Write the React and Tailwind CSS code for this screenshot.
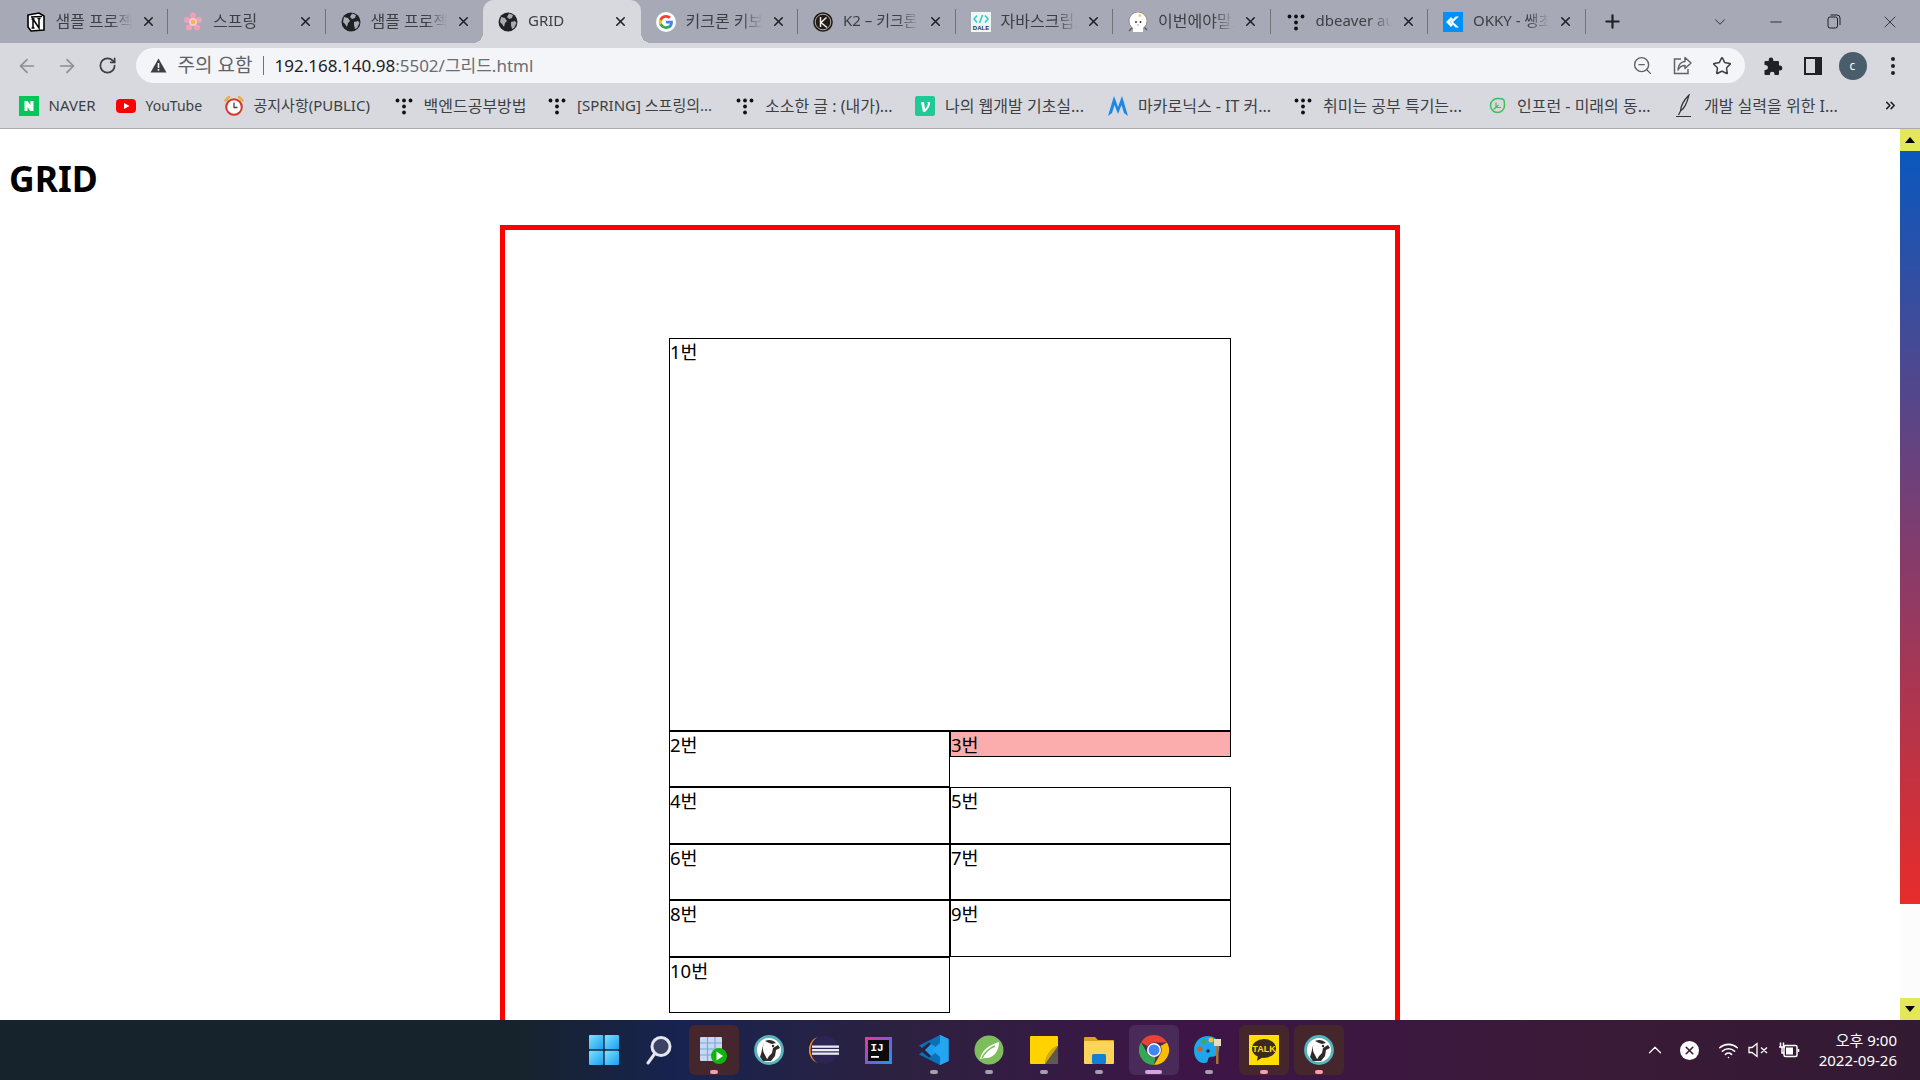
import React from "react";
import {
	ArrowLeft,
	ArrowRight,
	RotateCw,
	ZoomOut,
	Star,
	X,
	Plus,
	ChevronDown,
	ChevronUp,
	Minus,
	ChevronsRight,
	Wifi,
} from "lucide-react";

const Globe = () => (
	<svg width="20" height="20" viewBox="0 0 20 20">
		<circle cx="10" cy="10" r="9.5" fill="#202124" />
		<path d="M3 5l4 1 2 3-2 2-1 4-2-3-2-2zM11 1.5l4 1.5-1 3-3 1-2-2zM13 10l4-1 1.500 2-2.500 5-2 1-1-4z" fill="#a8abb7" />
	</svg>
);

const Notion = () => (
	<svg width="20" height="20" viewBox="0 0 20 20">
		<path d="M2 3l11-2 5 3v14l-13 1-3-4z" fill="#fff" stroke="#000" strokeWidth="1.600" />
		<path d="M5 5l11-.5" stroke="#000" strokeWidth="1.400" />
		<path d="M7 16V7l6 9V6.500M5.500 7H8.500M11.500 6.500h3M5.500 16h3" fill="none" stroke="#000" strokeWidth="1.500" />
	</svg>
);

const Flower = () => (
	<svg width="20" height="20" viewBox="0 0 20 20">
		<circle cx="10" cy="3.500" r="3" fill="#f2a0b5" />
		<circle cx="16" cy="8" r="3" fill="#f0a3b8" />
		<circle cx="14" cy="15.500" r="3" fill="#f2a0b5" />
		<circle cx="6" cy="15.500" r="3" fill="#f0a3b8" />
		<circle cx="4" cy="8" r="3" fill="#f2a0b5" />
		<circle cx="10" cy="10" r="4" fill="#f8c8d4" />
		<circle cx="10" cy="10" r="2.200" fill="#f6b73c" />
	</svg>
);

const GoogleG = () => (
	<svg width="20" height="20" viewBox="0 0 20 20">
		<circle cx="10" cy="10" r="10" fill="#fff" />
		<path d="M16.900 10.200c0-.5 0-1-.1-1.400H10v2.700h3.900c-.2.900-.7 1.700-1.500 2.200v1.800h2.400c1.400-1.300 2.100-3.100 2.100-5.300z" fill="#4285f4" />
		<path d="M10 17c2 0 3.600-.7 4.800-1.700l-2.400-1.800c-.6.400-1.400.7-2.400.7-1.900 0-3.500-1.300-4.100-3H3.500v1.900C4.700 15.400 7.100 17 10 17z" fill="#34a853" />
		<path d="M5.900 11.200c-.3-.8-.3-1.600 0-2.400V6.900H3.500c-.8 1.700-.8 4.500 0 6.200z" fill="#fbbc05" />
		<path d="M10 5.800c1.100 0 2 .4 2.800 1.100l2.100-2.100C13.600 3.700 12 3 10 3 7.100 3 4.700 4.600 3.500 6.900l2.400 1.900c.6-1.700 2.200-3 4.100-3z" fill="#ea4335" />
	</svg>
);

const K2 = () => (
	<svg width="20" height="20" viewBox="0 0 20 20">
		<circle cx="10" cy="10" r="9.800" fill="#201a18" />
		<circle cx="10" cy="10" r="7.800" fill="none" stroke="#d7ccc4" strokeWidth="0.800" />
		<path d="M7.500 5v10M13.500 5.500L8 10.500l6 5" fill="none" stroke="#f3ece6" strokeWidth="1.500" />
	</svg>
);

const Dale = () => (
	<svg width="20" height="20" viewBox="0 0 20 20">
		<rect width="20" height="20" fill="#f2f5f4" />
		<path d="M6 3.500L3 7l3 3.500M14 3.500L17 7l-3 3.500M11.500 3L8.500 11" fill="none" stroke="#24d3c0" strokeWidth="1.500" />
		<text x="10" y="17.500" textAnchor="middle" fontSize="6" fontWeight="800" fill="#23324a" fontFamily="'Liberation Sans',sans-serif">DALE</text>
	</svg>
);

const Ghost = () => (
	<svg width="20" height="20" viewBox="0 0 20 20">
		<path d="M1 19l4-4M19 18l-4-4" stroke="#555" strokeWidth="1.200" />
		<circle cx="10" cy="9" r="9" fill="#fff" stroke="#777" strokeWidth="0.700" />
		<path d="M5 16h10v4H5z" fill="#fff" />
		<circle cx="8" cy="10" r="0.900" fill="#222" />
		<circle cx="12.500" cy="10" r="0.900" fill="#222" />
		<path d="M9 13h2" stroke="#b77" strokeWidth="0.800" />
		<circle cx="12" cy="3.500" r="1.500" fill="#f4d65c" />
	</svg>
);

const TDots = () => (
	<svg width="20" height="20" viewBox="0 0 20 20" fill="#111">
		<circle cx="3.500" cy="4.500" r="1.900" />
		<circle cx="10" cy="4.500" r="1.900" />
		<circle cx="16.500" cy="4.500" r="1.900" />
		<circle cx="10" cy="10.500" r="1.900" />
		<circle cx="10" cy="16.500" r="1.900" />
	</svg>
);

const Okky = () => (
	<svg width="20" height="20" viewBox="0 0 20 20">
		<rect width="20" height="20" fill="#0090f9" />
		<path d="M8 5l-5 5 5 5 2-2-3-3 3-3zM16 4.500l-6 5.500 6 5.500h-3.500L7.500 10l5-5.500z" fill="#fff" />
	</svg>
);

const Naver = () => (
	<svg width="20" height="20" viewBox="0 0 20 20">
		<rect width="20" height="20" fill="#03c75a" />
		<path d="M5.500 5h3.200l2.700 4V5h3.100v10h-3.200L8.600 11v4H5.500z" fill="#fff" />
	</svg>
);

const YouTube = () => (
	<svg width="20" height="20" viewBox="0 0 20 20">
		<rect y="3" width="20" height="14" rx="4" fill="#ff0000" />
		<path d="M8 7l5.500 3L8 13z" fill="#fff" />
	</svg>
);

const Alarm = () => (
	<svg width="20" height="22" viewBox="0 0 20 22">
		<path d="M1.500 5.500L5 2M18.500 5.500L15 2" stroke="#e6b143" strokeWidth="2.500" strokeLinecap="round" />
		<circle cx="10" cy="12" r="7.800" fill="#fff" stroke="#d9352c" strokeWidth="2" />
		<path d="M10 7.500V12.500h3.500" fill="none" stroke="#444" strokeWidth="1.300" />
	</svg>
);

const Vlog = () => (
	<svg width="20" height="20" viewBox="0 0 20 20">
		<rect width="20" height="20" rx="2" fill="#20c997" />
		<path d="M6 6h3l1 7c2-2 3-4 3-6l-1-1h3c.5 3-1.500 7-5 10H8z" fill="#fff" />
	</svg>
);

const Macro = () => (
	<svg width="20" height="22" viewBox="0 0 20 22">
		<path d="M0 21L6 1l4 11 4-11 6 20-4-3-2.500-8L10 19l-3.500-9L4 18z" fill="#1b87e6" />
	</svg>
);

const Leaf = () => (
	<svg width="17" height="17" viewBox="0 0 17 17" fill="none" stroke="#3cbf5c" strokeWidth="1.500">
		<path d="M8.500 1.500a7 7 0 1 0 7 7c0-2 0-5-1-6s-4-1-6-1z" />
		<path d="M4.500 12.500l5-4.500M7 5.500v5h5" strokeWidth="1.200" />
	</svg>
);

const Pen = () => (
	<svg width="18" height="24" viewBox="0 0 18 24" fill="none" stroke="#333" strokeWidth="1.200">
		<path d="M14 1C10 5 6 11 5.500 17 9 15 12 9 14 1zM5.500 17L3.500 21M1 22.500h15" />
	</svg>
);

const Share = () => (
	<svg width="21" height="21" viewBox="0 0 21 21" fill="none" stroke="#5f6368" strokeWidth="1.500">
		<path d="M9 4H2.500v14.500H16V14" />
		<path d="M13 2.500L19 8l-6 5.500V10.500C9.500 10.500 7.500 12 6 15c0-5 3-8.500 7-8.500z" strokeLinejoin="round" />
	</svg>
);

const Puzzle = () => (
	<svg width="20" height="20" viewBox="0 0 20 20" fill="#202124">
		<path d="M8 1.500a2.300 2.300 0 0 1 2.300 2.300V5H15a1 1 0 0 1 1 1v3.500h.800a2.500 2.500 0 0 1 0 5H16V18a1 1 0 0 1-1 1h-3.500v-1a2.300 2.300 0 0 0-4.600 0v1H2.500a1 1 0 0 1-1-1v-4h1a2.500 2.500 0 0 0 0-5h-1V6a1 1 0 0 1 1-1h3.200V3.800A2.300 2.300 0 0 1 8 1.500z" />
	</svg>
);

const SidePanel = () => (
	<svg width="18" height="18" viewBox="0 0 18 18">
		<rect x="1" y="1" width="16" height="16" fill="none" stroke="#202124" strokeWidth="2" />
		<rect x="11" y="1" width="6" height="16" fill="#202124" />
	</svg>
);

const Restore = () => (
	<svg width="14" height="15" viewBox="0 0 14 15" fill="none" stroke="#202124" strokeWidth="1">
		<rect x="1" y="3" width="9.500" height="11" rx="2" />
		<path d="M3.500 1h6.500a3 3 0 0 1 3 3v7" />
	</svg>
);

const Warning = () => (
	<svg width="17" height="15" viewBox="0 0 17 15">
		<path d="M8.500 0.500L16.500 14.500H.5z" fill="#3c4043" />
		<rect x="7.700" y="5" width="1.600" height="5" fill="#f4f5f8" />
		<rect x="7.700" y="11" width="1.600" height="1.700" fill="#f4f5f8" />
	</svg>
);

const WinLogo = () => (
	<svg width="30" height="30" viewBox="0 0 30 30">
		<defs>
			<linearGradient id="wl" x1="0" y1="0" x2="1" y2="1">
				<stop offset="0" stopColor="#7de4fb" />
				<stop offset="1" stopColor="#1a9df0" />
			</linearGradient>
		</defs>
		<rect width="14.300" height="14.300" rx="1" fill="url(#wl)" />
		<rect x="15.700" width="14.300" height="14.300" rx="1" fill="url(#wl)" />
		<rect y="15.700" width="14.300" height="14.300" rx="1" fill="url(#wl)" />
		<rect x="15.700" y="15.700" width="14.300" height="14.300" rx="1" fill="url(#wl)" />
	</svg>
);

const SearchIcon = () => (
	<svg width="28" height="30" viewBox="0 0 28 30">
		<circle cx="16" cy="11.500" r="9" fill="#3c4264" stroke="#e3e6ee" strokeWidth="3" />
		<path d="M9.500 19L3 28" stroke="#e3e6ee" strokeWidth="3" strokeLinecap="round" />
	</svg>
);

const RunTable = () => (
	<svg width="27" height="27" viewBox="0 0 27 27">
		<rect width="22" height="24" rx="1" fill="#c6d9f1" />
		<path d="M0 6h22M0 12h22M0 18h22M7.500 0v24M15 0v24" stroke="#7ba6dd" strokeWidth="1.200" />
		<circle cx="19" cy="19" r="8" fill="#11b50e" />
		<path d="M16.500 14.500l6.500 4.500-6.500 4.500z" fill="#fff" />
	</svg>
);

const Beaver = () => (
	<svg width="30" height="30" viewBox="0 0 30 30">
		<circle cx="15" cy="15" r="13.500" fill="#fff" stroke="#55b4bd" strokeWidth="2.800" />
		<path d="M6 22C8 17 8 12 10 8c-2 5-1 9 1 12l3 6H9z" fill="#2f2a28" />
		<path d="M24 10l2 3-4 2-1 6-4 5h-5l3-5 3-3 1-5z" fill="#2f2a28" />
		<path d="M11 6c4-2 8-1 11 2l-4 1-3-1z" fill="#2f2a28" />
		<circle cx="19" cy="11" r="1.200" fill="#2f2a28" />
	</svg>
);

const Eclipse = () => (
	<svg width="30" height="30" viewBox="0 0 30 30">
		<circle cx="15.500" cy="15" r="14" fill="#2c2455" />
		<path d="M9 1.500A14.500 14.500 0 0 0 9 28.500 16 16 0 0 1 9 1.500z" fill="#f08a1d" />
		<rect x="3" y="10.500" width="27" height="2.300" fill="#e9e9f0" />
		<rect x="3" y="14" width="27" height="2.300" fill="#e9e9f0" />
		<rect x="3" y="17.500" width="27" height="2.300" fill="#e9e9f0" />
	</svg>
);

const Intellij = () => (
	<svg width="27" height="27" viewBox="0 0 27 27">
		<defs>
			<linearGradient id="ij" x1="0" y1="0" x2="1" y2="1">
				<stop offset="0" stopColor="#fc318c" />
				<stop offset="0.500" stopColor="#7c59e0" />
				<stop offset="1" stopColor="#08a0fa" />
			</linearGradient>
		</defs>
		<rect width="27" height="27" fill="url(#ij)" />
		<rect x="3" y="3" width="21" height="21" fill="#0b0b0f" />
		<text x="5.500" y="14" fontSize="11" fontWeight="700" fill="#fff" fontFamily="'Liberation Mono',monospace">IJ</text>
		<rect x="6" y="19" width="8" height="1.800" fill="#fff" />
	</svg>
);

const VsCode = () => (
	<svg width="30" height="30" viewBox="0 0 30 30">
		<path d="M21 0L29.500 4V26L21 30 6 15z" fill="#1f9cf0" />
		<path d="M21 0v30L0 19.500l3-2.500 7 5.500L21 15 10 7.500l-7 5.500-3-2.500z" fill="#0a70b8" />
		<path d="M21 0L29.500 4V26L21 30V8L13 15l8 7z" fill="#24a5f2" />
	</svg>
);

const SpringLeaf = () => (
	<svg width="30" height="30" viewBox="0 0 30 30">
		<circle cx="15" cy="15" r="14.500" fill="#7ebd5c" />
		<path d="M6 24C8 15 15 10 25 7c0 9-5 16-13 16-2 0-4 .5-6 1z" fill="#fff" />
		<path d="M8 23C11 17 16 13 21 11" stroke="#7ebd5c" strokeWidth="1.500" fill="none" />
	</svg>
);

const Sticky = () => (
	<svg width="28" height="28" viewBox="0 0 28 28">
		<rect width="28" height="28" rx="1" fill="#ffd200" />
		<path d="M28 10V28H15c0-6 5-16 13-18z" fill="#5e5a52" />
		<path d="M28 10c-8 2-13 12-13 18l13-18z" fill="#d9a900" />
	</svg>
);

const FolderIcon = () => (
	<svg width="30" height="28" viewBox="0 0 30 28">
		<path d="M0 2a1 1 0 0 1 1-1h10l3 3h15a1 1 0 0 1 1 1v3H0z" fill="#e0a316" />
		<rect y="5" width="30" height="23" rx="1" fill="#fcd45c" />
		<rect x="8" y="18" width="14" height="10" rx="1.500" fill="#1180d6" />
	</svg>
);

const ChromeIcon = () => (
	<svg width="30" height="30" viewBox="0 0 30 30">
		<path d="M15 0a15 15 0 0 1 13 7.500H15a7.500 7.500 0 0 0-6.500 3.700L2.100 7.300A15 15 0 0 1 15 0z" fill="#ea4335" />
		<path d="M28 7.500A15 15 0 0 1 15 30l6.500-11.200A7.500 7.500 0 0 0 21.500 11z" fill="#fbbc05" />
		<path d="M15 30A15 15 0 0 1 2.100 7.300l6.400 11.100a7.500 7.500 0 0 0 8 3.500z" fill="#34a853" />
		<circle cx="15" cy="15" r="7" fill="#fff" />
		<circle cx="15" cy="15" r="5.500" fill="#4285f4" />
	</svg>
);

const Palette = () => (
	<svg width="30" height="30" viewBox="0 0 30 30">
		<path d="M14 1C6 1 0 7 0 15c0 8 5 14 11 13 4-.5 2-4 4-5.500 2-1.500 5 0 7-2 3-3 4-8 3-12-1-4-6-7.500-11-7.500z" fill="#1ea7e8" />
		<circle cx="6" cy="14" r="2.500" fill="#e3521f" />
		<circle cx="10" cy="7" r="2.500" fill="#4ba84a" />
		<circle cx="17" cy="5" r="2.500" fill="#f3c11e" />
		<circle cx="14" cy="16" r="1.800" fill="#1a2a60" />
		<rect x="22" y="11" width="2.500" height="18" fill="#a9702e" />
		<path d="M20 4h7v7h-7z" fill="#e8dcc2" />
	</svg>
);

const KakaoTalk = () => (
	<svg width="30" height="30" viewBox="0 0 30 30">
		<rect width="30" height="30" fill="#ffde00" />
		<ellipse cx="15" cy="13.500" rx="12" ry="9.500" fill="#3c2a1e" />
		<path d="M9 20l-1 6 6-4z" fill="#3c2a1e" />
		<text x="15" y="17" textAnchor="middle" fontSize="9" fontWeight="700" fill="#ffde00" fontFamily="'Liberation Sans',sans-serif">TALK</text>
	</svg>
);

const tabs = [
	{ id: 1, title: "샘플 프로젝트", icon: <Notion />, size: "text-[16px]", sep: true },
	{ id: 2, title: "스프링", icon: <Flower />, size: "text-[16px]", sep: true },
	{ id: 3, title: "샘플 프로젝트", icon: <Globe />, size: "text-[16px]", sep: false },
	{ id: 4, title: "GRID", icon: <Globe />, size: "text-[15px]", active: true, sep: false },
	{ id: 5, title: "키크론 키보드", icon: <GoogleG />, size: "text-[16px]", sep: true },
	{ id: 6, title: "K2 – 키크론 K2", icon: <K2 />, size: "text-[15px]", sep: true },
	{ id: 7, title: "자바스크립트 배열", icon: <Dale />, size: "text-[16px]", sep: true },
	{ id: 8, title: "이번에야말로 CS", icon: <Ghost />, size: "text-[16px]", sep: true },
	{ id: 9, title: "dbeaver auto", icon: <TDots />, size: "text-[15px]", sep: true },
	{ id: 10, title: "OKKY - 쌩초보", icon: <Okky />, size: "text-[15px]", sep: true },
];

const bookmarks = [
	{ title: "NAVER", icon: <Naver />, w: "w-[46px] text-[15px]" },
	{ title: "YouTube", icon: <YouTube />, w: "w-[57px] text-[14px]" },
	{ title: "공지사항(PUBLIC)", icon: <Alarm />, w: "w-[119px] text-[15px]" },
	{ title: "백엔드공부방법", icon: <TDots />, w: "w-[102.5px] text-[16px]" },
	{ title: "[SPRING] 스프링의...", icon: <TDots />, w: "w-[137px] text-[15px]" },
	{ title: "소소한 글 : (내가)...", icon: <TDots />, w: "w-[129px] text-[16px]" },
	{ title: "나의 웹개발 기초실...", icon: <Vlog />, w: "w-[142px] text-[16px]" },
	{ title: "마카로닉스 - IT 커...", icon: <Macro />, w: "w-[134px] text-[16px]" },
	{ title: "취미는 공부 특기는...", icon: <TDots />, w: "w-[143px] text-[16px]" },
	{ title: "인프런 - 미래의 동...", icon: <Leaf />, w: "w-[136px] text-[16px]" },
	{ title: "개발 실력을 위한 I...", icon: <Pen />, w: "w-[137px] text-[16px]" },
];

const apps = [
	{ icon: <WinLogo /> },
	{ icon: <SearchIcon /> },
	{ icon: <RunTable />, open: true, dot: "pink" },
	{ icon: <Beaver /> },
	{ icon: <Eclipse /> },
	{ icon: <Intellij /> },
	{ icon: <VsCode />, dot: "gray" },
	{ icon: <SpringLeaf />, dot: "gray" },
	{ icon: <Sticky />, dot: "gray" },
	{ icon: <FolderIcon />, dot: "gray" },
	{ icon: <ChromeIcon />, active: true },
	{ icon: <Palette />, dot: "gray" },
	{ icon: <KakaoTalk />, open: true, dot: "pink" },
	{ icon: <Beaver />, open: true, dot: "pink" },
];

function Tab({ tab }) {
	return (
		<div
			className={`relative flex items-center w-[157.5px] h-[43px] pl-[15px] ${
				tab.active ? "bg-[#d8d9df] rounded-t-[11px]" : ""
			}`}
		>
			{tab.active && (
				<>
					<span className="absolute bottom-0 -left-[10px] w-[10px] h-[10px] bg-[radial-gradient(circle_at_0_0,transparent_10px,#d8d9df_10px)]" />
					<span className="absolute bottom-0 -right-[10px] w-[10px] h-[10px] bg-[radial-gradient(circle_at_100%_0,transparent_10px,#d8d9df_10px)]" />
				</>
			)}
			<span className="flex items-center justify-center w-5 h-5 shrink-0">{tab.icon}</span>
			<span className={`ml-[10px] pb-[2px] w-[78px] overflow-hidden whitespace-nowrap text-[#3c4043] [mask-image:linear-gradient(to_right,black_70%,transparent_98%)] ${tab.size}`}>
				{tab.title}
			</span>
			<X size={15} strokeWidth={2.5} className="ml-[7px] text-[#202124] shrink-0" />
			{tab.sep && <span className="absolute right-0 top-[9px] w-px h-[25px] bg-[#6f7278]" />}
		</div>
	);
}

function Slot({ app }) {
	return (
		<div className="flex items-center justify-center w-[55px] h-[60px]">
			<div
				className={`relative flex items-center justify-center w-[50px] h-[50px] rounded-md ${
					app.open ? "bg-[#44262c]" : app.active ? "bg-[#4a2a58]" : ""
				}`}
			>
				{app.icon}
				{app.dot === "pink" && <span className="absolute bottom-[1px] w-2 h-[4px] rounded-full bg-[#f2a0ad]" />}
				{app.dot === "gray" && <span className="absolute bottom-[1px] w-2 h-[4px] rounded-full bg-[#a59fad]" />}
				{app.active && <span className="absolute bottom-[1px] w-[17px] h-[4px] rounded-full bg-[#d9a2e2]" />}
			</div>
		</div>
	);
}

function Cell({ children, className = "" }) {
	return (
		<div className={`border border-black text-[18.5px] leading-[26px] text-black ${className}`}>
			{children}
		</div>
	);
}

export default function App() {
	return (
		<div className="flex flex-col w-full h-screen overflow-hidden bg-white font-['Noto_Sans','Noto_Sans_CJK_KR',sans-serif]">
			{/* tab strip */}
			<div className="flex items-center h-[43px] pl-[10.5px] bg-[#a7aab6] shrink-0">
				{tabs.map((tab) => (
					<Tab key={tab.id} tab={tab} />
				))}
				<Plus size={21} strokeWidth={2.5} className="ml-[16px] text-[#202124]" />
				<ChevronDown size={18} strokeWidth={1.2} className="ml-[88px] text-[#202124]" />
				<Minus size={18} strokeWidth={1.2} className="ml-[38px] text-[#202124]" />
				<span className="ml-[42px]">
					<Restore />
				</span>
				<X size={20} strokeWidth={1} className="ml-[39px] text-[#202124]" />
			</div>

			{/* toolbar */}
			<div className="flex items-center h-[45px] pl-[7px] bg-[#d8d9df] shrink-0">
				<span className="flex items-center justify-center w-10">
					<ArrowLeft size={22} strokeWidth={1.8} className="text-[#8a8d93]" />
				</span>
				<span className="flex items-center justify-center w-10">
					<ArrowRight size={22} strokeWidth={1.8} className="text-[#8a8d93]" />
				</span>
				<span className="flex items-center justify-center w-10">
					<RotateCw size={19} strokeWidth={2.2} className="text-[#3c4043]" />
				</span>
				<div className="flex items-center ml-[8.5px] w-[1609px] h-[35px] pl-[14px] pr-[2.5px] rounded-full bg-[#f4f5f8]">
					<Warning />
					<span className="ml-[11px] w-[76px] text-[19px] text-[#5f6368] whitespace-nowrap">주의 요함</span>
					<span className="ml-[9px] w-px h-[19px] bg-[#6f7278]" />
					<span className="ml-[11px] text-[17px] text-[#202124] whitespace-nowrap">
						192.168.140.98<span className="text-[#6a6e74]">:5502/그리드.html</span>
					</span>
					<div className="flex items-center ml-auto">
						<span className="flex items-center justify-center w-10">
							<ZoomOut size={21} strokeWidth={1.6} className="text-[#5f6368]" />
						</span>
						<span className="flex items-center justify-center w-10">
							<Share />
						</span>
						<span className="flex items-center justify-center w-10">
							<Star size={20} strokeWidth={1.8} className="text-[#3c4043]" />
						</span>
					</div>
				</div>
				<div className="flex items-center ml-[8px]">
					<span className="flex items-center justify-center w-10">
						<Puzzle />
					</span>
					<span className="flex items-center justify-center w-10">
						<SidePanel />
					</span>
					<span className="flex items-center justify-center w-10">
						<span className="flex items-center justify-center w-7 h-7 rounded-full bg-[#4a5d6b] text-[12px] text-white">c</span>
					</span>
					<span className="flex flex-col items-center justify-center gap-[3px] w-10">
						<span className="w-1 h-1 rounded-full bg-[#202124]" />
						<span className="w-1 h-1 rounded-full bg-[#202124]" />
						<span className="w-1 h-1 rounded-full bg-[#202124]" />
					</span>
				</div>
			</div>

			{/* bookmarks bar */}
			<div className="flex items-center h-[41px] pb-[5px] pl-[18.5px] bg-[#d8d9df] border-b border-[#a9abb0] shrink-0">
				{bookmarks.map((b) => (
					<div key={b.title} className="flex items-center mr-[21px]">
						<span className="flex items-center justify-center w-5 h-5">{b.icon}</span>
						<span className={`ml-[10px] whitespace-nowrap text-[#3c4043] ${b.w}`}>{b.title}</span>
					</div>
				))}
				<ChevronsRight size={15} strokeWidth={2.5} className="ml-auto mr-[22px] text-[#202124]" />
			</div>

			{/* page + scrollbar */}
			<div className="flex flex-1 min-h-0">
				<main className="flex-1 min-w-0 overflow-hidden px-[10px] pt-[25px]">
					<h1 className="-ml-[1px] mb-[23px] text-[35.5px] leading-[48px] font-bold text-black">GRID</h1>
					<div className="w-[900px] mx-auto pt-[108px] pb-[100px] border-[5px] border-[#ff0000]">
						<div className="grid grid-cols-[281px_281px] grid-rows-[393px_repeat(5,56.4px)] w-[562px] mx-auto">
							<Cell className="col-span-2">1번</Cell>
							<Cell>2번</Cell>
							<Cell className="self-start h-[26px] bg-[#fbacac]">3번</Cell>
							<Cell>4번</Cell>
							<Cell>5번</Cell>
							<Cell>6번</Cell>
							<Cell>7번</Cell>
							<Cell>8번</Cell>
							<Cell>9번</Cell>
							<Cell>10번</Cell>
						</div>
					</div>
				</main>
				<div className="flex flex-col w-5 shrink-0 bg-[#fcfcfc]">
					<div className="flex items-center justify-center h-[22px] bg-[#e4e858]">
						<span className="w-0 h-0 border-x-[5px] border-x-transparent border-b-[6px] border-b-black" />
					</div>
					<div className="h-[753px] bg-[linear-gradient(180deg,#0a58bd,#7d3d70_50%,#e82c2a)]" />
					<div className="flex-1" />
					<div className="flex items-center justify-center h-[22px] bg-[#e4e858]">
						<span className="w-0 h-0 border-x-[5px] border-x-transparent border-t-[6px] border-t-black" />
					</div>
				</div>
			</div>

			{/* taskbar */}
			<div className="flex items-center h-[60px] pl-[576px] shrink-0 bg-[linear-gradient(90deg,#17232c_0%,#17232c_27%,#17234f_35%,#2d2140_47%,#3d1547_62%,#3a1a38_82%,#331a33_100%)]">
				{apps.map((app, i) => (
					<Slot key={i} app={app} />
				))}
				<div className="flex items-center ml-auto pr-[23px] text-white">
					<span className="flex items-center justify-center w-[30px]">
						<ChevronUp size={22} strokeWidth={1.3} />
					</span>
					<span className="flex items-center justify-center w-[38px]">
						<span className="flex items-center justify-center w-[19px] h-[19px] rounded-full bg-white">
							<X size={13} strokeWidth={3} className="text-[#3a1a38]" />
						</span>
					</span>
					<span className="flex items-center justify-center w-[30px] ml-[5px]">
						<Wifi size={21} strokeWidth={1.8} />
					</span>
					<span className="flex items-center justify-center w-[30px]">
						<svg width="21" height="16" viewBox="0 0 21 16" fill="none" stroke="#fff" strokeWidth="1.300">
							<path d="M1 5.500h3L9 1.500v13L4 10.500H1zM13 5.500l6 5.500M19 5.500l-6 5.500" />
						</svg>
					</span>
					<span className="flex items-center justify-center w-[30px] ml-[1px]">
						<svg width="22" height="18" viewBox="0 0 22 18" fill="none" stroke="#fff" strokeWidth="1.500">
							<rect x="6" y="4.500" width="13" height="11" rx="1.500" />
							<rect x="8" y="6.500" width="7" height="7" fill="#fff" strokeWidth="0" />
							<path d="M1 6h6M2.500 6V1.500M5.500 6V1.500M4 6v6h2M20.500 8v3" />
						</svg>
					</span>
					<div className="flex flex-col items-end w-[93px] text-[15px] leading-[20px]">
						<span>오후 9:00</span>
						<span>2022-09-26</span>
					</div>
				</div>
			</div>
		</div>
	);
}
